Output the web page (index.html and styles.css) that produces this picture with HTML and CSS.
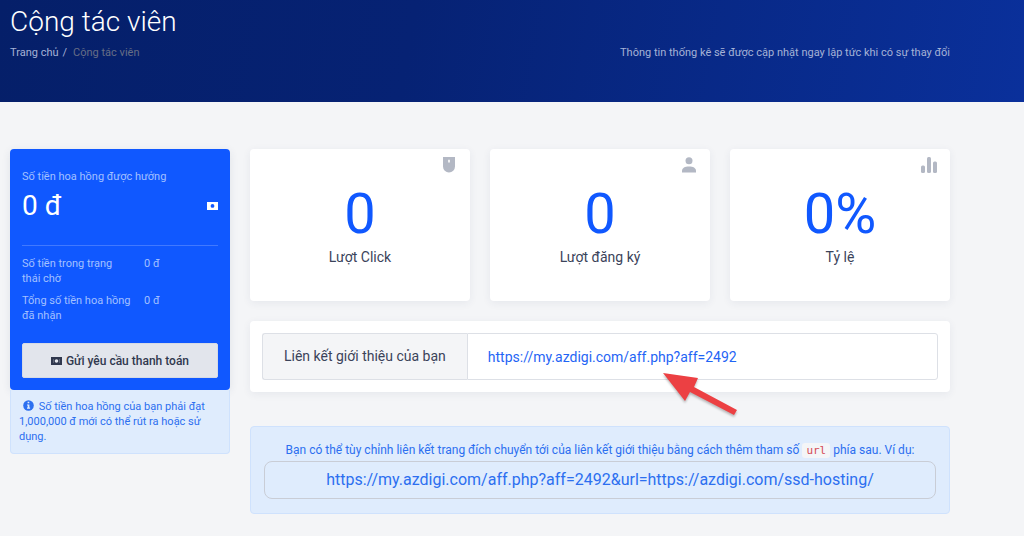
FILE: index.html
```html
<!DOCTYPE html>
<html lang="vi">
    <head>
        <title>Cộng tác viên</title>
        <meta charset="UTF-8">
        <meta name="viewport" content="width=device-width, initial-scale=1">
        <link rel="stylesheet" href="styles.css">
    </head>
    <body>
        <header class="page-header">
            <h1>Cộng tác viên</h1>
            <div class="header-row">
                <nav class="breadcrumb">
                    <a href="#">Trang chủ</a>
                    <span class="separator">/</span>
                    <span class="current">Cộng tác viên</span>
                </nav>
                <p>Thông tin thống kê sẽ được cập nhật ngay lập tức khi có sự thay đổi</p>
            </div>
        </header>
        <main class="content">
            <aside>
                <section class="balance">
                    <h2>Số tiền hoa hồng được hưởng</h2>
                    <div class="amount">
                        <strong>0 đ</strong>
                        <svg width="11" height="8" viewBox="0 0 11 8">
                            <path fill="currentColor" fill-rule="evenodd" d="M0 0h11v8H0zM5.500 2a1.900 1.900 0 1 0 0 3.800a1.900 1.900 0 1 0 0-3.800z"/>
                        </svg>
                    </div>
                    <dl>
                        <dt>Số tiền trong trạng thái chờ</dt>
                        <dd>0 đ</dd>
                        <dt>Tổng số tiền hoa hồng đã nhận</dt>
                        <dd>0 đ</dd>
                    </dl>
                    <button type="button">
                        <svg width="11" height="8" viewBox="0 0 11 8">
                            <path fill="currentColor" fill-rule="evenodd" d="M0 0h11v8H0zM2.500 2v4h6V2z"/>
                            <circle cx="5.500" cy="4" r="1.300" fill="#e2e5ec"/>
                            <path fill="currentColor" fill-rule="evenodd" d="M2.500 2h6v4h-6zM5.500 2.200a1.800 1.800 0 1 0 0 3.600a1.800 1.800 0 1 0 0-3.600z"/>
                        </svg>
                        Gửi yêu cầu thanh toán
                    </button>
                </section>
                <p class="notice">
                    <svg width="11" height="11" viewBox="0 0 11 11">
                        <circle cx="5.500" cy="5.500" r="5.300" fill="currentColor"/>
                        <path fill="#dfecfd" d="M4.600 1.800h1.700v1.500H4.600zM4 4.400h2.400v3.200h.7v1.200H4V7.600h.7v-2H4z"/>
                    </svg>
                    Số tiền hoa hồng của bạn phải đạt 1,000,000 đ mới có thể rút ra hoặc sử dụng.
                </p>
            </aside>
            <div class="main-column">
                <div class="stats">
                    <section class="stat">
                        <svg class="stat-icon" width="16" height="16" viewBox="0 0 16 16">
                            <path fill="currentColor" fill-rule="evenodd" d="M2 0h12v9.500a6 6 0 0 1-12 0zM7.200 2.800v2.700h1.600V2.800z"/>
                        </svg>
                        <strong>0</strong>
                        <span>Lượt Click</span>
                    </section>
                    <section class="stat">
                        <svg class="stat-icon" width="16" height="16" viewBox="0 0 16 16">
                            <circle cx="8" cy="3.700" r="3.500" fill="currentColor"/>
                            <path fill="currentColor" d="M1 15.500v-1.700C1 11 4 9.500 8 9.500s7 1.500 7 4.300v1.700z"/>
                        </svg>
                        <strong>0</strong>
                        <span>Lượt đăng ký</span>
                    </section>
                    <section class="stat">
                        <svg class="stat-icon" width="16" height="16" viewBox="0 0 16 16">
                            <g fill="currentColor">
                                <rect x="0" y="8.500" width="4" height="7.500" rx="1.500"/>
                                <rect x="6" y="0" width="4" height="16" rx="1.500"/>
                                <rect x="12" y="4.500" width="4" height="11.500" rx="1.500"/>
                            </g>
                        </svg>
                        <strong>0%</strong>
                        <span>Tỷ lệ</span>
                    </section>
                </div>
                <section class="referral">
                    <label for="referral-link">Liên kết giới thiệu của bạn</label>
                    <input id="referral-link" type="text" value="https://my.azdigi.com/aff.php?aff=2492" readonly>
                    <svg class="arrow" width="76" height="46" viewBox="0 0 76 46">
                        <path fill="#ec4043" d="M0 1 35 6 31 15 74 38 71 43 27 20 22 29z"/>
                    </svg>
                </section>
                <section class="custom-link">
                    <p>Bạn có thể tùy chỉnh liên kết trang đích chuyển tới của liên kết giới thiệu bằng cách thêm tham số <code>url</code> phía sau. Ví dụ:</p>
                    <div class="example">https://my.azdigi.com/aff.php?aff=2492&amp;url=https://azdigi.com/ssd-hosting/</div>
                </section>
            </div>
        </main>
    </body>
</html>
```
FILE: styles.css
```css
* {
    box-sizing: border-box;
}
body {
    margin: 0;
    background-color: #f4f5f7;
    color: #3b435a;
    font-family: Roboto, "Liberation Sans", sans-serif;
    font-size: 11px;
    line-height: 15px;
}
h1, h2, p, dl, dd {
    margin: 0;
    font-weight: 400;
}
.page-header {
    padding: 4px 74px 42px 10px;
    background: linear-gradient(100deg, #051f69 0%, #062274 40%, #0a309b 100%);
    color: #a5b2d6;
}
h1 {
    margin-bottom: 6px;
    color: #fff;
    font-size: 28px;
    font-weight: 300;
    line-height: 35px;
}
.header-row {
    display: flex;
    justify-content: space-between;
}
.breadcrumb {
    display: flex;
    gap: 4px;
}
.breadcrumb a {
    color: #a5b2d6;
    text-decoration: none;
}
.breadcrumb .current {
    margin-left: 2px;
    color: #666e86;
}
.content {
    display: grid;
    grid-template-columns: 220px 1fr;
    gap: 20px;
    padding: 47px 74px 22px 10px;
}
.balance {
    padding: 20px 12px 12px;
    border-radius: 4px;
    background-color: #1058ff;
    color: #a3c0ff;
    box-shadow: 0 2px 8px rgba(40, 60, 100, .1);
}
.balance h2 {
    font-size: 11px;
    line-height: 15px;
}
.amount {
    display: flex;
    align-items: center;
    justify-content: space-between;
    padding: 4px 0 21px;
    border-bottom: 1px solid #4179ff;
    color: #fff;
}
.amount strong {
    font-size: 28px;
    font-weight: 400;
    line-height: 36px;
}
dl {
    display: grid;
    grid-template-columns: 110px 1fr;
    gap: 7px 12px;
    padding: 10px 0 20px;
}
.balance button {
    display: flex;
    align-items: center;
    justify-content: center;
    gap: 4px;
    width: 100%;
    height: 35px;
    border: 1px solid #d5dae5;
    border-radius: 2px;
    background-color: #e2e5ec;
    color: #30384e;
    font: 500 12px Roboto, sans-serif;
}
.notice {
    padding: 9px 8px;
    border: 1px solid #cfe2fd;
    border-top: 0;
    border-radius: 0 0 4px 4px;
    background-color: #dfecfd;
    color: #2c6ff0;
}
.notice svg {
    margin: 0 2px 0 4px;
    vertical-align: -1px;
}
.stats {
    display: grid;
    grid-template-columns: repeat(3, 1fr);
    gap: 20px;
    margin-bottom: 20px;
}
.stat, .referral {
    position: relative;
    border-radius: 4px;
    background-color: #fff;
    box-shadow: 0 2px 8px rgba(40, 60, 100, .07);
}
.stat {
    display: flex;
    flex-direction: column;
    align-items: center;
    padding: 32px 12px 34px;
}
.stat-icon {
    position: absolute;
    top: 8px;
    right: 13px;
    color: #b3b8c4;
}
.stat strong {
    color: #1058ff;
    font-size: 56px;
    font-weight: 400;
    line-height: 66px;
}
.stat span {
    font-size: 14px;
    line-height: 20px;
}
.referral {
    display: flex;
    margin-bottom: 34px;
    padding: 12px;
}
.referral label {
    padding: 13px 21px;
    border: 1px solid #dde0e6;
    border-right: 0;
    border-radius: 3px 0 0 3px;
    background-color: #f4f5f7;
    font-size: 14px;
    line-height: 19px;
}
.referral input {
    flex: 1;
    min-width: 0;
    padding: 0 20px;
    border: 1px solid #dde0e6;
    border-radius: 0 3px 3px 0;
    outline: 0;
    background: none;
    color: #1f65f5;
    font: 14px Roboto, sans-serif;
}
.arrow {
    position: absolute;
    top: 51px;
    left: 413px;
    filter: drop-shadow(0 2px 1px rgba(0, 0, 0, .25));
}
.custom-link {
    padding: 16px 13px 14px;
    border: 1px solid #cfe2fd;
    border-radius: 4px;
    background-color: #dfecfd;
    color: #2c6ff0;
    text-align: center;
}
.custom-link p {
    font-size: 12px;
}
.custom-link code {
    padding: 1px 4px;
    border-radius: 3px;
    background-color: #f4f5f7;
    color: #d44a55;
    font: 11px "DejaVu Sans Mono", monospace;
}
.example {
    margin-top: 3px;
    padding: 8px;
    border: 1px solid #c9cdd6;
    border-radius: 8px;
    font-size: 16px;
    line-height: 20px;
}
```
